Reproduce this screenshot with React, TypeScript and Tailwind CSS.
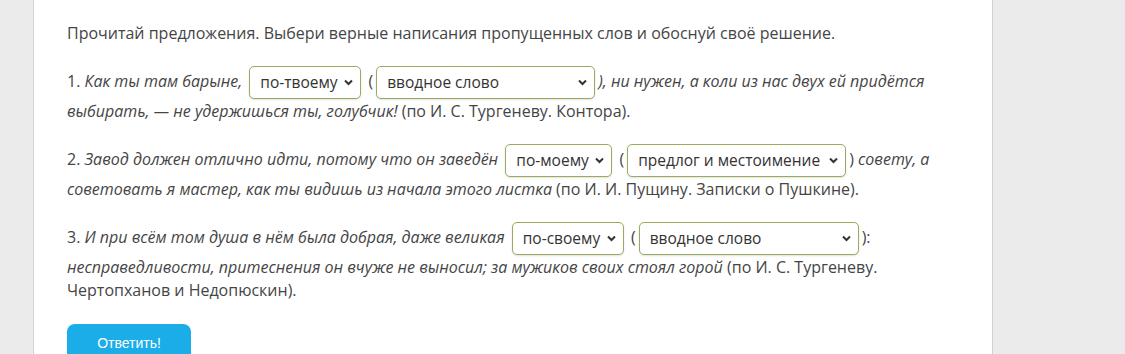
import { useState } from "react";

function Pick({ options, width }: { options: string[]; width: string }) {
	const [value, setValue] = useState(options[0]);
	return (
		<span className="relative inline-block align-middle mx-[3px] my-[1px]">
			<select
				value={value}
				onChange={(e) => setValue(e.target.value)}
				className={
					"appearance-none h-[33px] rounded-[5px] border border-[#9aac5c] bg-white pl-[10px] pr-[20px] text-[15.5px] text-[#333] not-italic shadow-[0_1px_2px_rgba(0,0,0,0.12)] outline-none " +
					width
				}
			>
				{options.map((o) => (
					<option key={o}>{o}</option>
				))}
			</select>
			<svg
				className="pointer-events-none absolute right-[8px] top-[13px]"
				width="9"
				height="7"
				viewBox="0 0 9 7"
			>
				<path d="M1 1.5 L4.5 5 L8 1.5" fill="none" stroke="#333" strokeWidth="2" />
			</svg>
		</span>
	);
}

export default function App() {
	return (
		<main
			className="min-h-screen bg-[#ebebeb] text-[#454545]"
			style={{ fontFamily: '"Open Sans", "Noto Sans", sans-serif' }}
		>
			<section className="ml-[33px] w-[960px] min-h-screen bg-white border-x border-[#d2d2d2] pt-[22px] pl-[33px] pr-[33px] text-[16px] leading-[23px]">
				<p>Прочитай предложения. Выбери верные написания пропущенных слов и обоснуй своё решение.</p>

				<p className="mt-[20px]">
					1. <i>Как ты там барыне,</i>{" "}
					<Pick options={["по-твоему", "по твоему"]} width="w-[112px]" /> (
					<Pick options={["вводное слово", "предлог и местоимение", "наречие"]} width="w-[219px]" />
					<i>), ни нужен, а коли из нас двух ей придётся выбирать, — не удержишься ты, голубчик!</i>{" "}
					(по И. С. Тургеневу. Контора).
				</p>

				<p className="mt-[20px]">
					2. <i>Завод должен отлично идти, потому что он заведён</i>{" "}
					<Pick options={["по-моему", "по моему"]} width="w-[107px]" /> (
					<Pick options={["предлог и местоимение", "вводное слово", "наречие"]} width="w-[219px]" />
					) <i>совету, а советовать я мастер, как ты видишь из начала этого листка</i> (по И. И.
					Пущину. Записки о Пушкине).
				</p>

				<p className="mt-[20px]">
					3. <i>И при всём том душа в нём была добрая, даже великая</i>{" "}
					<Pick options={["по-своему", "по своему"]} width="w-[112px]" /> (
					<Pick options={["вводное слово", "предлог и местоимение", "наречие"]} width="w-[220px]" />
					):{" "}
					<i>несправедливости, притеснения он вчуже не выносил; за мужиков своих стоял горой</i> (по И.
					С. Тургеневу. Чертопханов и Недопюскин).
				</p>

				<button
					className="mt-[22px] h-[38px] w-[124px] rounded-[8px] bg-[#1aade8] text-[14px] text-white"
					style={{ fontFamily: '"Liberation Sans", Arial, sans-serif' }}
				>
					Ответить!
				</button>
			</section>
		</main>
	);
}
